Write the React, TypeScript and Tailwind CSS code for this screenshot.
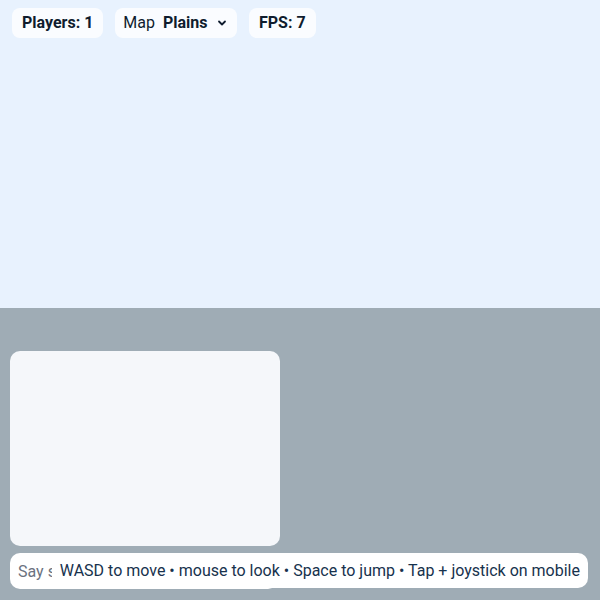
import { useState } from "react";

const App: React.FC = () => {
  const [map, setMap] = useState("Plains");
  const [msg, setMsg] = useState("");

  return (
    <div
      className="relative w-[600px] h-[600px] overflow-hidden flex flex-col"
      style={{ fontFamily: "Roboto, 'Noto Sans', sans-serif" }}
    >
      {/* scene */}
      <div className="h-[308px] bg-[#e8f2fe]" />
      <div className="flex-1 bg-[#9facb5]" />

      {/* top hud */}
      <div className="absolute top-2 left-3 flex items-center gap-3 text-[16px] text-[#0f1c2e]">
        <div className="h-[30px] px-2.5 flex items-center rounded-lg bg-white/80 font-bold">
          Players: 1
        </div>
        <label className="h-[30px] pl-2 pr-2.5 flex items-center gap-2 rounded-lg bg-white/80">
          <span>Map</span>
          <span className="relative flex items-center font-bold">
            <select
              value={map}
              onChange={(e) => setMap(e.target.value)}
              className="appearance-none bg-transparent pr-4 font-bold outline-none"
            >
              <option>Plains</option>
              <option>Desert</option>
              <option>Snow</option>
            </select>
            <svg
              className="pointer-events-none absolute right-0 top-1/2 -translate-y-1/2"
              width="10"
              height="10"
              viewBox="0 0 10 10"
            >
              <path d="M2 3.5 L5 6.5 L8 3.5" fill="none" stroke="#0f1c2e" strokeWidth="1.8" strokeLinecap="round" strokeLinejoin="round" />
            </svg>
          </span>
        </label>
        <div className="h-[30px] px-2.5 flex items-center rounded-lg bg-white/80 font-bold">
          FPS: 7
        </div>
      </div>

      {/* chat */}
      <div className="absolute left-[10px] top-[351px] w-[270px] flex flex-col gap-[7px]">
        <div className="h-[195px] rounded-[10px] bg-[#f5f7fa]" />
        <input
          value={msg}
          onChange={(e) => setMsg(e.target.value)}
          placeholder="Say something..."
          className="w-[268px] h-[36px] rounded-[10px] bg-white px-2 text-[16px] text-[#1e2b3a] placeholder:text-[#6b7280] outline-none"
        />
      </div>

      {/* controls hint */}
      <div className="absolute right-3 top-[553px] h-[35px] px-2 flex items-center rounded-[10px] bg-white text-[16px] text-[#17324d] whitespace-nowrap">
        WASD to move • mouse to look • Space to jump • Tap + joystick on mobile
      </div>
    </div>
  );
};

export default App;
